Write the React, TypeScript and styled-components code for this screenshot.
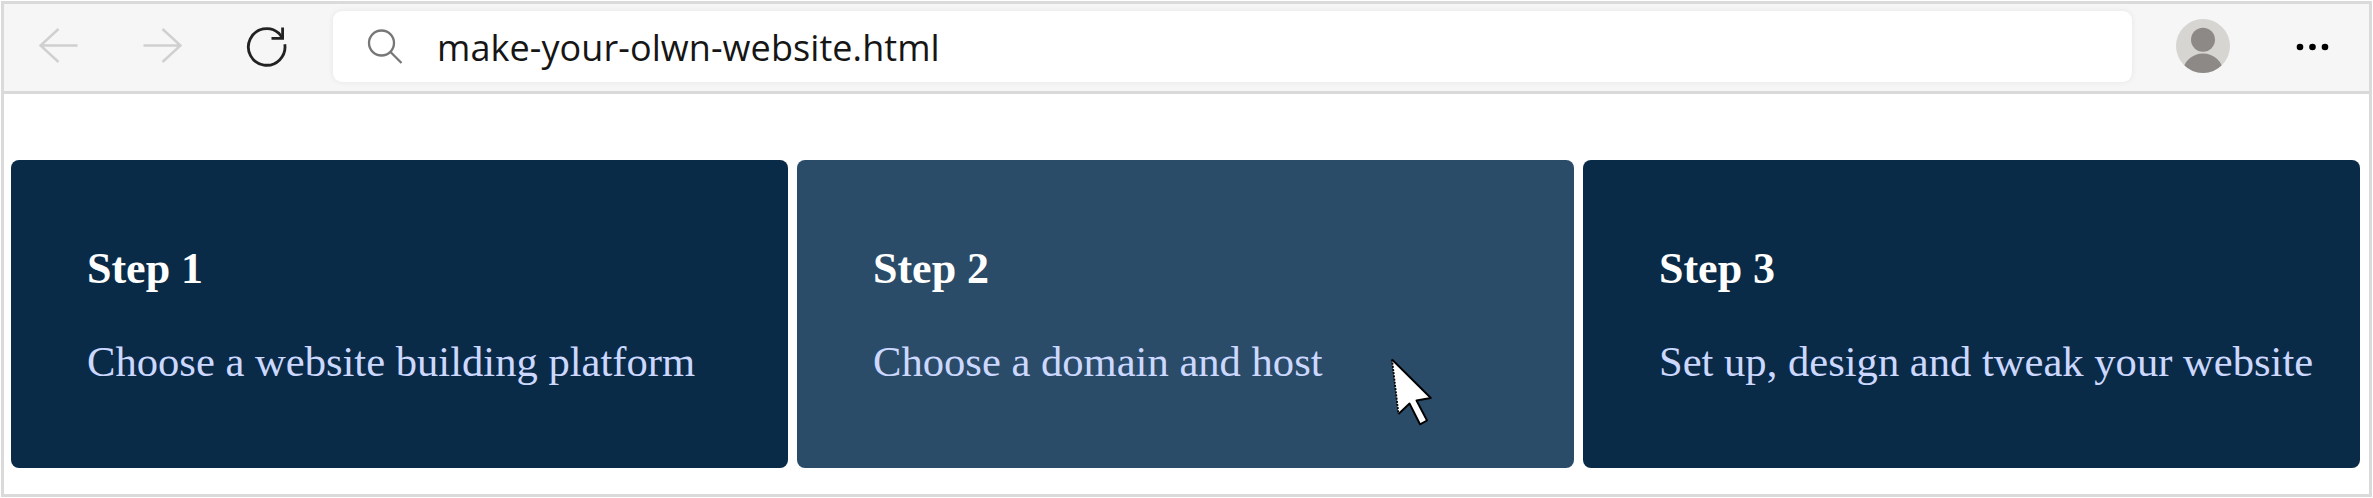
import React from 'react';
import styled, { createGlobalStyle } from 'styled-components';

const GlobalStyle = createGlobalStyle`
  *, *::before, *::after { box-sizing: border-box; }
  html, body { margin: 0; padding: 0; background: #fff; }
`;

const Page = styled.div`
  width: 2373px;
  height: 498px;
  padding: 1px;
  background: #fff;
  overflow: hidden;
`;

const BrowserWindow = styled.div`
  width: 2371px;
  height: 496px;
  border: 3px solid #d9dad9;
  display: flex;
  flex-direction: column;
  background: #fff;
`;

const Toolbar = styled.header`
  height: 90px;
  flex: none;
  display: flex;
  align-items: flex-start;
  padding-left: 29px;
  background: #f6f6f6;
  border-bottom: 3px solid #d9d9d9;
`;

const NavButton = styled.button<{ $gap: number }>`
  width: 50px;
  height: 50px;
  margin: 17px ${({ $gap }) => $gap}px 0 0;
  padding: 0;
  border: 0;
  background: none;
  svg { display: block; }
`;

const AddressBar = styled.div`
  width: 1799px;
  height: 71px;
  margin-top: 7px;
  padding-left: 31px;
  display: flex;
  align-items: flex-start;
  background: #fff;
  border-radius: 9px;
  box-shadow: 0 0 6px rgba(0, 0, 0, 0.07);
`;

const SearchIcon = styled.svg`
  flex: none;
  width: 44px;
  height: 44px;
  margin: 14px 27px 0 0;
`;

const Address = styled.span`
  margin-top: 12px;
  padding-left: 2px;
  font: 400 36px/50px 'Open Sans', 'Noto Sans', sans-serif;
  letter-spacing: 0.08px;
  color: #161616;
  white-space: nowrap;
`;

const Avatar = styled.svg`
  flex: none;
  width: 54px;
  height: 54px;
  margin: 15px 0 0 44px;
`;

const MenuDots = styled.svg`
  flex: none;
  width: 40px;
  height: 12px;
  margin: 36.5px 0 0 62.5px;
`;

const Steps = styled.main`
  display: flex;
  gap: 9.5px;
  padding: 66px 7px 0;
`;

const StepCard = styled.section<{ $hovered?: boolean }>`
  position: relative;
  width: 776.5px;
  height: 307.6px;
  flex: none;
  padding: 84px 0 0 76px;
  border-radius: 8px;
  background: ${({ $hovered }) => ($hovered ? '#2a4c68' : '#0a2b47')};
  font-family: 'Liberation Serif', 'Times New Roman', serif;
  white-space: nowrap;
`;

const StepTitle = styled.h2`
  margin: 0 0 43px;
  font-size: 44px;
  line-height: 50px;
  font-weight: 700;
  color: #fff;
`;

const StepText = styled.p`
  margin: 0;
  font-size: 42.6px;
  line-height: 50px;
  color: #ccd8ff;
`;

const Pointer = styled.svg`
  position: absolute;
  left: 592px;
  top: 196px;
  width: 48px;
  height: 74px;
`;

const steps = [
  { title: 'Step 1', text: 'Choose a website building platform' },
  { title: 'Step 2', text: 'Choose a domain and host', hovered: true },
  { title: 'Step 3', text: 'Set up, design and tweak your website' },
];

export default function App() {
  return (
    <Page>
      <GlobalStyle />
      <BrowserWindow>
        <Toolbar>
          <NavButton $gap={54} aria-label="Back">
            <svg width="50" height="50" fill="none" stroke="#d0d0d0" strokeWidth="2.4">
              <path d="M25.5 8 7.5 24.5l18 16.5M7.5 24.5h37" />
            </svg>
          </NavButton>
          <NavButton $gap={54} aria-label="Forward">
            <svg width="50" height="50" fill="none" stroke="#d0d0d0" strokeWidth="2.4">
              <path d="M25.5 8l18 16.5-18 16.5M43.5 24.5h-37" />
            </svg>
          </NavButton>
          <NavButton $gap={42} aria-label="Refresh">
            <svg width="50" height="50" fill="none" stroke="#222" strokeWidth="2.8">
              <path d="M43.8 23.3A18.3 18.3 0 1 1 38 12.4L41.4 16.6" />
              <path d="M41.6 6.5v10.9H30.5" />
            </svg>
          </NavButton>
          <AddressBar>
            <SearchIcon fill="none" stroke="#777" strokeWidth="2.3">
              <circle cx="17.5" cy="18" r="12.5" />
              <path d="M26.5 27 37.5 38" />
            </SearchIcon>
            <Address>make-your-olwn-website.html</Address>
          </AddressBar>
          <Avatar>
            <defs>
              <clipPath id="avatar-circle">
                <circle cx="27" cy="27" r="27" />
              </clipPath>
            </defs>
            <circle cx="27" cy="27" r="27" fill="#d7d5d1" />
            <g clipPath="url(#avatar-circle)" fill="#8d8986">
              <circle cx="27" cy="20.7" r="12" />
              <ellipse cx="27" cy="53" rx="20" ry="18.5" />
            </g>
          </Avatar>
          <MenuDots fill="#000">
            <circle cx="7" cy="6" r="3.3" />
            <circle cx="19.5" cy="6" r="3.3" />
            <circle cx="32" cy="6" r="3.3" />
          </MenuDots>
        </Toolbar>
        <Steps>
          {steps.map(({ title, text, hovered }) => (
            <StepCard key={title} $hovered={hovered}>
              <StepTitle>{title}</StepTitle>
              <StepText>{text}</StepText>
              {hovered && (
                <Pointer strokeLinejoin="round">
                  <path
                    d="M3 3.5 41.8 42 27.5 44.5 38 64.5 31 68.3 20.5 47.5 9.5 58Z"
                    fill="#fff"
                  />
                  <path
                    d="M3 3.5 41.8 42 27.5 44.5 38 64.5 31 68.3 20.5 47.5 9.5 58"
                    fill="none"
                    stroke="#000"
                    strokeWidth="1.9"
                  />
                  <path d="M3 3.5 9.5 58" stroke="#000" strokeWidth="1.8" strokeDasharray="2 1.2" />
                </Pointer>
              )}
            </StepCard>
          ))}
        </Steps>
      </BrowserWindow>
    </Page>
  );
}
